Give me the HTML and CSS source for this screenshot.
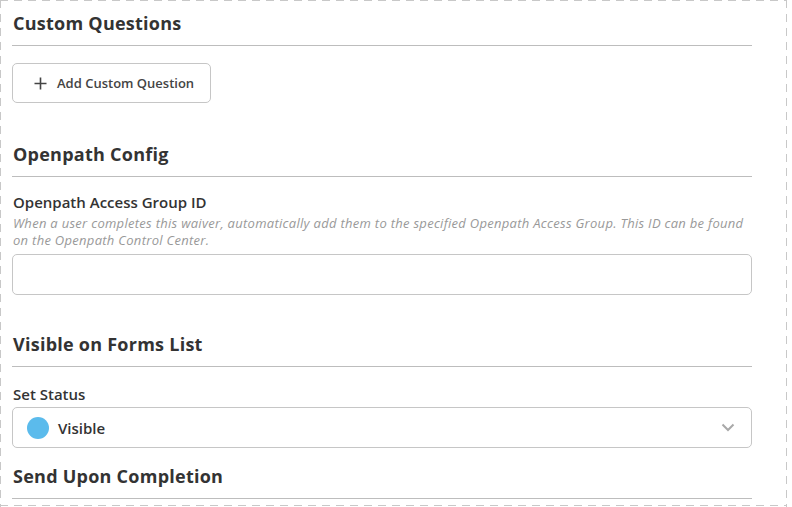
FILE: index.html
```html
<!DOCTYPE html>
<html>
<head>
<meta charset="utf-8">
<link rel="stylesheet" href="styles.css">
</head>
<body>
<div class="frame">
  <section class="section">
    <h2 class="section-title">Custom Questions</h2>
    <button class="add-btn" type="button">
      <svg class="plus" width="13" height="13" viewBox="0 0 13 13"><path d="M6.5 0.5v12M0.5 6.5h12" stroke="#444" stroke-width="1.6" fill="none"/></svg>
      <span>Add Custom Question</span>
    </button>
  </section>

  <section class="section s2">
    <h2 class="section-title">Openpath Config</h2>
    <div class="field">
      <label class="field-label">Openpath Access Group ID</label>
      <p class="help">When a user completes this waiver, automatically add them to the specified Openpath Access Group. This ID can be found on the Openpath Control Center.</p>
      <div class="input"></div>
    </div>
  </section>

  <section class="section s3">
    <h2 class="section-title">Visible on Forms List</h2>
    <div class="field status">
      <label class="field-label">Set Status</label>
      <div class="select">
        <span class="dot"></span>
        <span class="select-value">Visible</span>
        <svg class="chevron" width="14" height="9" viewBox="0 0 14 9"><path d="M1.5 1.5l5.5 5.5 5.5-5.5" stroke="#a9a9a9" stroke-width="2" fill="none"/></svg>
      </div>
    </div>
  </section>

  <section class="section s4">
    <h2 class="section-title">Send Upon Completion</h2>
  </section>
</div>
</body>
</html>
```

FILE: styles.css
```css
* { box-sizing: border-box; }
html, body { margin: 0; padding: 0; background: #fff; }
body {
  font-family: "Open Sans", Lato, sans-serif;
  color: #333;
  width: 792px;
  height: 507px;
  overflow: hidden;
}
.frame {
  width: 787px;
  height: 507px;
  padding: 11px 35px 0 12px;
  background:
    repeating-linear-gradient(90deg, #c8c8c8 0 8px, transparent 8px 14px) left top / 100% 1px no-repeat,
    repeating-linear-gradient(90deg, #c8c8c8 0 8px, transparent 8px 14px) left 0 top 505px / 100% 1px no-repeat,
    repeating-linear-gradient(180deg, #c8c8c8 0 8px, transparent 8px 14px) left top / 1px 100% no-repeat,
    repeating-linear-gradient(180deg, #c8c8c8 0 8px, transparent 8px 14px) right top / 1px 100% no-repeat;
}
.section-title {
  margin: 0;
  padding-left: 1px;
  font-size: 18px;
  line-height: 24px;
  font-weight: 700;
  color: #333;
  padding-bottom: 10px;
  border-bottom: 1px solid #bdbdbd;
  letter-spacing: 0.25px;
}
.add-btn {
  margin-top: 17px;
  height: 40px;
  width: 199px;
  display: flex;
  align-items: center;
  gap: 10px;
  padding: 0 0 0 21px;
  background: #fff;
  border: 1px solid #c6c6c6;
  border-radius: 5px;
  font-family: inherit;
  font-size: 13px;
  font-weight: 600;
  color: #444;
}
.s2 { margin-top: 39px; }
.field { margin-top: 15px; }
.field-label {
  display: block;
  padding-left: 1px;
  font-size: 15px;
  line-height: 20px;
  font-weight: 600;
  color: #333;
}
.help {
  margin: 3px 0 0;
  padding-left: 1px;
  font-size: 13px;
  line-height: 17px;
  letter-spacing: 0.29px;
  font-style: italic;
  color: #999;
}
.input {
  margin-top: 5px;
  height: 41px;
  border: 1px solid #c6c6c6;
  border-radius: 5px;
}
.s3 { margin-top: 37px; }
.status { margin-top: 17px; }
.select {
  margin-top: 3px;
  height: 41px;
  border: 1px solid #c6c6c6;
  border-radius: 5px;
  display: flex;
  align-items: center;
  padding: 0 16px 0 14px;
}
.dot {
  width: 22px;
  height: 22px;
  border-radius: 50%;
  background: #5bbbec;
  flex: none;
}
.select-value {
  margin-left: 9px;
  font-size: 15px;
  font-weight: 600;
  color: #333;
  flex: 1;
}
.s4 { margin-top: 16px; }
```
